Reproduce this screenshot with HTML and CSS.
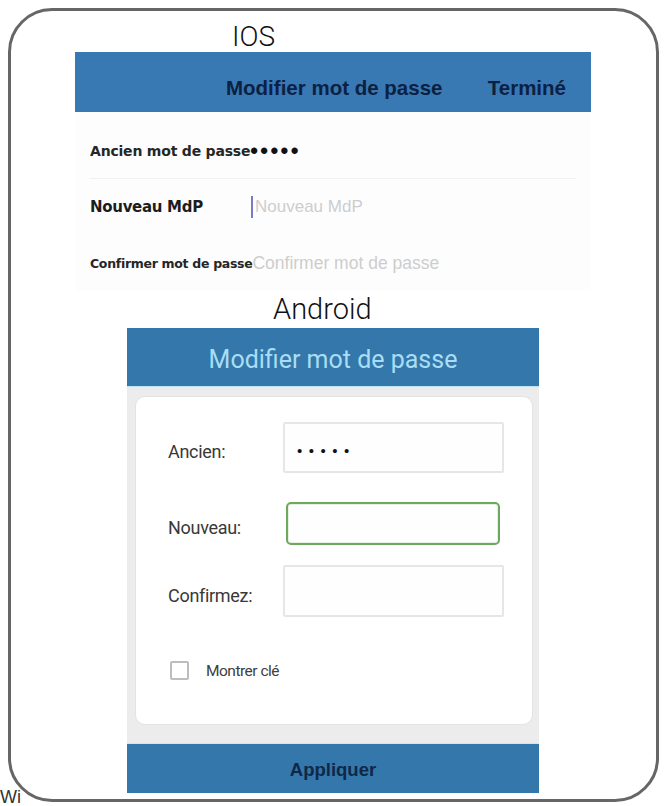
FILE: index.html
```html
<!DOCTYPE html>
<html lang="fr">
<head>
<meta charset="utf-8">
<title>Modifier mot de passe</title>
<link rel="stylesheet" href="styles.css">
</head>
<body>
<div class="frame">
  <div class="os-label ios-label">IOS</div>
  <section class="ios">
    <div class="ios-bar">
      <span class="ios-title">Modifier mot de passe</span>
      <span class="ios-done">Terminé</span>
    </div>
    <div class="ios-rows">
      <div class="ios-row sep">
        <span class="ios-l1">Ancien mot de passe</span><span class="ios-dots">•••••</span>
      </div>
      <div class="ios-row">
        <span class="ios-l2">Nouveau MdP</span>
        <span class="ios-field"><span class="cursor"></span><span class="ph ph2">Nouveau MdP</span></span>
      </div>
      <div class="ios-row">
        <span class="ios-l3">Confirmer mot de passe</span><span class="ph ph3">Confirmer mot de passe</span>
      </div>
    </div>
  </section>
  <div class="os-label android-label">Android</div>
  <section class="android">
    <div class="and-bar">Modifier mot de passe</div>
    <div class="and-body">
      <div class="card">
        <div class="and-row r1">
          <span class="and-label">Ancien:</span>
          <div class="box"><span class="and-dots">•••••</span></div>
        </div>
        <div class="and-row r2">
          <span class="and-label">Nouveau:</span>
          <div class="box focus"></div>
        </div>
        <div class="and-row r3">
          <span class="and-label">Confirmez:</span>
          <div class="box"></div>
        </div>
        <div class="check-row">
          <span class="checkbox"></span>
          <span class="check-label">Montrer clé</span>
        </div>
      </div>
    </div>
    <div class="and-apply">Appliquer</div>
  </section>
</div>
<span class="stray">Wi</span>
</body>
</html>
```
FILE: styles.css
```css
html, body {
  margin: 0;
  padding: 0;
  height: 806px;
  overflow: hidden;
  background: #ffffff;
}
body {
  position: relative;
  font-family: "Liberation Sans", Arial, sans-serif;
}
.frame {
  box-sizing: border-box;
  margin: 8px 0 0 8px;
  width: 651px;
  height: 794px;
  border: 3px solid #666666;
  border-radius: 44px;
  background: #ffffff;
}
.os-label {
  font-family: Roboto, "Liberation Sans", sans-serif;
  font-weight: 300;
  font-size: 28px;
  color: #111111;
}
.ios-label {
  height: 41px;
  box-sizing: border-box;
  padding: 10px 0 0 221px;
  line-height: 31px;
}
.ios {
  margin-left: 64px;
  width: 516px;
}
.ios-bar {
  box-sizing: border-box;
  height: 60px;
  background: #3878b3;
  display: flex;
  padding: 26px 25px 0 151px;
  line-height: 20px;
  font-weight: 700;
  font-size: 20.5px;
  color: #0c2142;
}
.ios-done {
  margin-left: auto;
}
.ios-rows {
  padding-top: 11px;
  padding-left: 15px;
  background: #fdfdfd;
}
.ios-row {
  height: 56px;
  display: flex;
  align-items: center;
  color: #1c1c1c;
  font-family: "DejaVu Sans", "Liberation Sans", sans-serif;
  font-weight: 700;
}
.ios-row.sep {
  height: 55px;
  border-bottom: 1px solid #f1f1f1;
  margin-right: 15px;
}
.ios-l1 {
  font-size: 14px;
  letter-spacing: -0.2px;
  color: #262626;
}
.ios-dots {
  font-family: "Liberation Sans", Arial, sans-serif;
  font-size: 22px;
  letter-spacing: 2.4px;
  color: #111;
  line-height: 1;
}
.ios-l2 {
  font-size: 15px;
  width: 161px;
  letter-spacing: -0.3px;
}
.ios-field {
  display: flex;
  align-items: center;
}
.cursor {
  display: inline-block;
  width: 2px;
  height: 22px;
  background: #7c7ac8;
  margin-right: 2px;
}
.ph {
  font-family: "Liberation Sans", Arial, sans-serif;
  font-weight: 400;
  color: #cdcdcd;
}
.ph2 {
  font-size: 17px;
}
.ios-l3 {
  font-size: 12.5px;
  letter-spacing: -0.3px;
  color: #262626;
}
.ph3 {
  font-size: 17.5px;
}
.android-label {
  height: 37px;
  line-height: 37px;
  padding-left: 262px;
  font-size: 29px;
}
.android {
  margin-left: 116px;
  width: 412px;
}
.and-bar {
  box-sizing: border-box;
  height: 59px;
  background: #3477ab;
  border-bottom: 1px solid #bfe3f2;
  color: #a8def5;
  text-align: center;
  font-family: Roboto, "Liberation Sans", sans-serif;
  font-size: 25px;
  line-height: 24px;
  padding-top: 20px;
}
.and-body {
  background: #ececec;
  padding: 9px 6px 18px 8px;
}
.card {
  background: #ffffff;
  border: 1px solid #e3e3e3;
  border-radius: 10px;
  padding: 25px 28px 44px 32px;
}
.and-row {
  display: flex;
  align-items: center;
  font-family: Roboto, "Liberation Sans", sans-serif;
}
.and-row.r2 {
  margin-top: 25px;
}
.and-row.r3 {
  margin-top: 16px;
}
.and-label {
  width: 115px;
  font-size: 18px;
  color: #383838;
  letter-spacing: -0.3px;
  padding-top: 8px;
}
.box {
  box-sizing: border-box;
  flex: 1;
  height: 51px;
  border: 2px solid #e6e6e6;
  border-radius: 2px;
  background: #fefefe;
  display: flex;
  align-items: center;
  padding-left: 12px;
}
.r3 .box {
  height: 52px;
}
.box.focus {
  height: 43px;
  margin: 4px 4px 4px 3px;
  border: 2px solid #6ea860;
  border-radius: 5px;
  box-shadow: inset 0 0 0 1px #e6f1e1;
}
.and-dots {
  font-family: "Liberation Sans", Arial, sans-serif;
  font-size: 15px;
  letter-spacing: 6.5px;
  color: #111;
  padding-top: 6px;
}
.check-row {
  display: flex;
  align-items: center;
  margin-top: 44px;
  padding-left: 2px;
}
.checkbox {
  box-sizing: border-box;
  width: 19px;
  height: 19px;
  border: 2px solid #bdbdbd;
  border-radius: 2px;
}
.check-label {
  margin-left: 17px;
  font-family: Roboto, "Liberation Sans", sans-serif;
  font-size: 15.5px;
  color: #404040;
  letter-spacing: -0.5px;
}
.and-apply {
  box-sizing: border-box;
  height: 50px;
  background: #3477ab;
  border-top: 1px solid #c9e6f3;
  color: #102848;
  font-weight: 700;
  font-size: 18.5px;
  text-align: center;
  line-height: 20px;
  padding-top: 16px;
}
.stray {
  position: absolute;
  left: 0;
  top: 787px;
  font-size: 18px;
  line-height: 20px;
  color: #333333;
  font-family: "Liberation Sans", Arial, sans-serif;
}
```
